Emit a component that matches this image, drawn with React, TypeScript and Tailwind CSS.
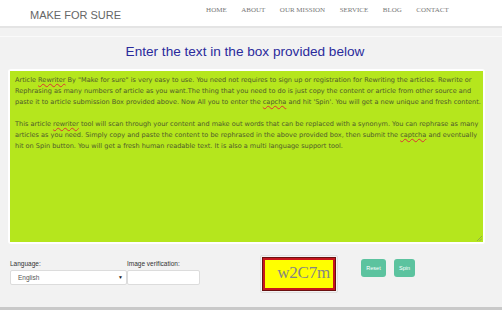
import React from "react";

const navItems = ["HOME", "ABOUT", "OUR MISSION", "SERVICE", "BLOG", "CONTACT"];

function Squiggle({ children }: { children: React.ReactNode }) {
	return (
		<span className="underline decoration-wavy decoration-[#d33] decoration-[0.6px] underline-offset-[1px]">
			{children}
		</span>
	);
}

export default function App() {
	return (
		<div className="relative w-[502px] h-[310px] bg-[#f2f2f2] flex flex-col overflow-hidden font-['Liberation_Sans',Arial,sans-serif]">
			{/* header */}
			<header className="h-[28px] bg-white border-b-2 border-[#e4e4e4] flex items-start shrink-0">
				<div className="ml-[30px] mt-[8px] text-[11px] leading-[14px] text-[#666]">MAKE FOR SURE</div>
				<nav className="ml-[85px] mt-[6px] flex gap-[14.5px] font-['Liberation_Serif',serif] text-[7px] leading-[9px] text-[#777]">
					{navItems.map((item) => (
						<span key={item}>{item}</span>
					))}
				</nav>
			</header>
			<div className="h-[9px] border-b border-[#fafafa] shrink-0" />

			{/* title */}
			<h1 className="mt-[6px] text-center text-[13.6px] leading-[17px] text-[#2a2a9c] pr-[12px]">
				Enter the text in the box provided below
			</h1>

			{/* text box */}
			<div className="mt-[9px] ml-[8px] w-[477px] bg-white p-[2px] rounded-[3px]">
				<div className="relative h-[171px] bg-[#b5e61d] px-[5px] pt-[4px] font-['DejaVu_Sans',Verdana,sans-serif] text-[6.55px] leading-[11px] text-[#4f5b2c] whitespace-nowrap">
					<div>
						Article <Squiggle>Rewriter</Squiggle> By "Make for sure" is very easy to use. You need not requires to sign up or registration for Rewriting the articles. Rewrite or
					</div>
					<div>
						Rephrasing as many numbers of article as you want.The thing that you need to do is just copy the content or article from other source and
					</div>
					<div>
						paste it to article submission Box provided above. Now All you to enter the <Squiggle>capcha</Squiggle> and hit 'Spin'. You will get a new unique and fresh content.
					</div>
					<div>&nbsp;</div>
					<div>
						This article <Squiggle>rewriter</Squiggle> tool will scan through your content and make out words that can be replaced with a synonym. You can rephrase as many
					</div>
					<div>
						articles as you need. Simply copy and paste the content to be rephrased in the above provided box, then submit the <Squiggle>captcha</Squiggle> and eventually
					</div>
					<div>hit on Spin button. You will get a fresh human readable text. It is also a multi language support tool.</div>
					<svg className="absolute right-[1px] bottom-[1px]" width="5" height="5" viewBox="0 0 5 5">
						<path d="M5 0 L0 5 M5 2.5 L2.5 5" stroke="#7a8a5a" strokeWidth="0.6" />
					</svg>
				</div>
			</div>

			{/* controls */}
			<div className="mt-[11px] flex items-start">
				<div className="ml-[10px] mt-[4px] flex items-end">
					<div className="flex flex-col w-[117px]">
						<label className="text-[6.5px] leading-[9px] text-[#333]">Language:</label>
						<div className="mt-[2px] h-[15px] bg-white border border-[#dcdcdc] rounded-[2px] flex items-center justify-between pl-[7px] pr-[3px] text-[6.5px] text-[#555]">
							<span>English</span>
							<span className="text-[5px] text-[#222]">▼</span>
						</div>
					</div>
					<div className="flex flex-col w-[73px]">
						<label className="text-[6.5px] leading-[9px] text-[#333]">Image verification:</label>
						<div className="mt-[2px] h-[15px] bg-white border border-[#dcdcdc] rounded-[2px]" />
					</div>
				</div>

				<div className="ml-[60px] p-[2px] border border-[#e0e0e0] rounded-[2px] bg-[#f4f4f4]">
					<div className="w-[72px] h-[32px] bg-[#ffff00] border-2 border-[#c8161d] outline outline-1 outline-[#6b1010] flex items-center justify-end pr-[3px] pb-[2px] font-['Liberation_Serif',serif] text-[17px] text-[#858585] tracking-[-0.2px]">
						w2C7m
					</div>
				</div>

				<div className="ml-[23px] mt-[4px] flex gap-[8px]">
					<button className="w-[25px] h-[18px] rounded-[3px] bg-[#5cc39f] text-white text-[5.5px]">Reset</button>
					<button className="w-[21px] h-[18px] rounded-[3px] bg-[#5cc39f] text-white text-[5.5px]">Spin</button>
				</div>
			</div>

			<div className="mt-auto h-[3px] bg-[#c9c9c9] shrink-0" />
		</div>
	);
}
